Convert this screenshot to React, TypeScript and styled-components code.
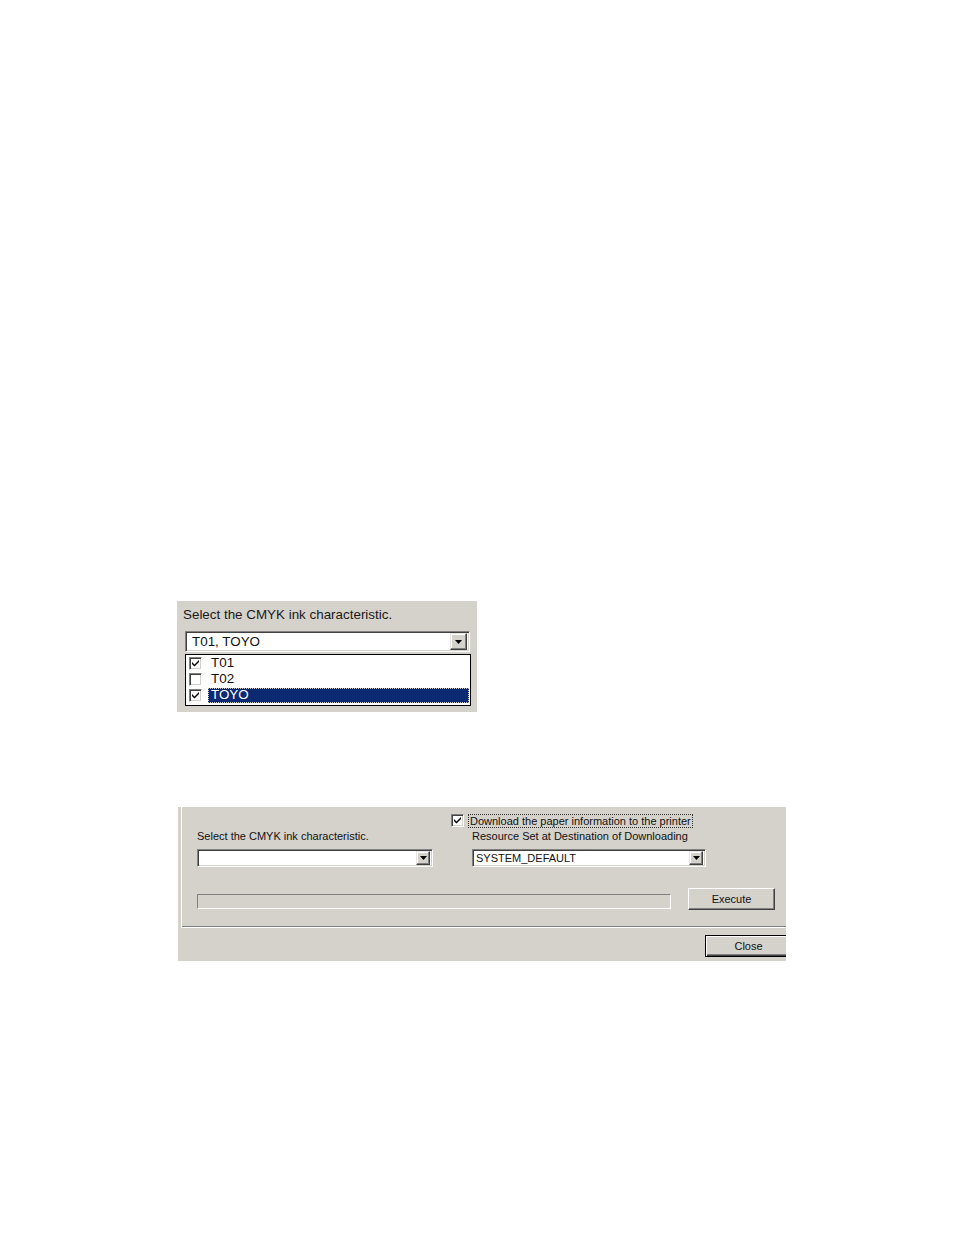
import React from 'react';
import styled, { createGlobalStyle } from 'styled-components';

const GlobalStyle = createGlobalStyle`
  html, body {
    margin: 0;
    padding: 0;
    background: #ffffff;
  }
  body {
    font-family: "Liberation Sans", Arial, sans-serif;
    color: #000;
  }
`;

const Page = styled.div`
  width: 954px;
  height: 1235px;
  padding: 601px 0 0 177px;
  box-sizing: border-box;
  display: flex;
  flex-direction: column;
  align-items: flex-start;
  gap: 95px;
`;

const Shot = styled.div<{ $w: number; $h: number; $shift?: number }>`
  width: ${(p) => p.$w}px;
  height: ${(p) => p.$h}px;
  margin-left: ${(p) => p.$shift ?? 0}px;
  background: #d5d2cc;
  box-sizing: border-box;
  overflow: hidden;
  display: flex;
  flex-direction: column;
`;

/* ---------- first screenshot ---------- */

const BigLabel = styled.div`
  font-size: 13.4px;
  line-height: 18px;
  margin: 5px 0 0 6px;
  color: #1a1a1a;
`;

const ComboWrap = styled.div`
  margin: 7px 0 0 8px;
`;

const Combo = styled.div<{ $w: number; $h: number; $pad: number }>`
  width: ${(p) => p.$w}px;
  height: ${(p) => p.$h}px;
  background: #fff;
  box-sizing: border-box;
  border-top: 1px solid #808080;
  border-left: 1px solid #808080;
  border-right: 1px solid #fff;
  border-bottom: 1px solid #fff;
  box-shadow: inset 1px 1px 0 #404040, inset -1px -1px 0 #d5d2cc;
  display: flex;
  align-items: center;
  padding: 0 2px 0 ${(p) => p.$pad}px;
`;

const ComboText = styled.span<{ $size: number }>`
  flex: 1;
  font-size: ${(p) => p.$size}px;
  white-space: nowrap;
  color: #111;
`;

const DropButton = styled.div<{ $s: number }>`
  width: ${(p) => p.$s}px;
  height: ${(p) => p.$s}px;
  box-sizing: border-box;
  background: #d5d2cc;
  border-top: 1px solid #e8e6e2;
  border-left: 1px solid #e8e6e2;
  border-right: 1px solid #404040;
  border-bottom: 1px solid #404040;
  box-shadow: inset -1px -1px 0 #808080, inset 1px 1px 0 #fff;
  display: flex;
  align-items: center;
  justify-content: center;
`;

const Arrow = () => (
  <svg width="7" height="4" viewBox="0 0 7 4">
    <path d="M0 0h7L3.5 4z" fill="#000" />
  </svg>
);

const ListBox = styled.div`
  width: 286px;
  height: 52px;
  margin: 2px 0 0 8px;
  background: #fff;
  border: 1px solid #000;
  box-sizing: border-box;
  padding: 0 1px 0 3px;
  display: flex;
  flex-direction: column;
`;

const ListRow = styled.div`
  height: 16px;
  display: flex;
  align-items: center;
  gap: 6px;
`;

const RowText = styled.span<{ $selected?: boolean }>`
  flex: 1;
  height: 15px;
  line-height: 14px;
  font-size: 13.4px;
  padding-left: 3px;
  color: ${(p) => (p.$selected ? '#fff' : '#111')};
  background: ${(p) => (p.$selected ? '#0c2a72' : 'transparent')};
  outline: ${(p) => (p.$selected ? '1px dotted #c8c8c8' : 'none')};
  outline-offset: -1px;
`;

const CheckBox = styled.span<{ $s: number }>`
  width: ${(p) => p.$s}px;
  height: ${(p) => p.$s}px;
  box-sizing: border-box;
  background: #fff;
  border-top: 1px solid #808080;
  border-left: 1px solid #808080;
  border-right: 1px solid #fff;
  border-bottom: 1px solid #fff;
  box-shadow: inset 1px 1px 0 #404040, inset -1px -1px 0 #d5d2cc;
  display: flex;
  align-items: center;
  justify-content: center;
  flex-shrink: 0;
`;

const Tick = () => (
  <svg width="7" height="7" viewBox="0 0 7 7">
    <path d="M0 2l2.5 2.5L7 0v2L2.5 6.5 0 4z" fill="#000" />
  </svg>
);

/* ---------- second screenshot ---------- */

const Panel = styled.div`
  height: 121px;
  margin-left: 3px;
  box-sizing: border-box;
  border-left: 1px solid #fff;
  border-bottom: 1px solid #fff;
  box-shadow: 0 -1px 0 #808080 inset;
  display: flex;
  flex-direction: column;
  padding-top: 7px;
`;

const CheckRow = styled.div`
  display: flex;
  align-items: center;
  gap: 5px;
  height: 13px;
  padding-left: 269px;
`;

const FocusLabel = styled.span`
  font-size: 11px;
  line-height: 12px;
  padding: 0 1px;
  outline: 1px dotted #333;
  color: #111;
`;

const FieldsRow = styled.div`
  display: grid;
  grid-template-columns: 236px 236px;
  column-gap: 39px;
  padding-left: 15px;
  margin-top: 2px;
`;

const Field = styled.div`
  display: flex;
  flex-direction: column;
  gap: 6px;
`;

const SmallLabel = styled.div`
  font-size: 11px;
  line-height: 14px;
  white-space: nowrap;
  color: #111;
`;

const ActionRow = styled.div`
  display: flex;
  align-items: center;
  gap: 17px;
  padding-left: 15px;
  margin-top: 21px;
`;

const Progress = styled.div`
  width: 474px;
  height: 15px;
  box-sizing: border-box;
  border-top: 1px solid #808080;
  border-left: 1px solid #808080;
  border-right: 1px solid #fff;
  border-bottom: 1px solid #fff;
  margin-top: 4px;
`;

const Button = styled.div<{ $default?: boolean }>`
  width: 87px;
  height: 22px;
  box-sizing: border-box;
  background: #d5d2cc;
  font-size: 11px;
  color: #111;
  display: flex;
  align-items: center;
  justify-content: center;
  flex-shrink: 0;
  border-top: 1px solid #fff;
  border-left: 1px solid #fff;
  border-right: 1px solid #404040;
  border-bottom: 1px solid #404040;
  box-shadow: inset -1px -1px 0 #808080;
  ${(p) =>
    p.$default &&
    `
    border: 1px solid #000;
    box-shadow: inset 1px 1px 0 #fff, inset -1px -1px 0 #404040, inset -2px -2px 0 #808080;
  `}
`;

const Footer = styled.div`
  display: flex;
  justify-content: flex-start;
  padding: 7px 0 0 527px;
`;

export default function App() {
  return (
    <>
      <GlobalStyle />
      <Page>
        <Shot $w={300} $h={111}>
          <BigLabel>Select the CMYK ink characteristic.</BigLabel>
          <ComboWrap>
            <Combo $w={285} $h={21} $pad={6}>
              <ComboText $size={13.4}>T01, TOYO</ComboText>
              <DropButton $s={17}>
                <Arrow />
              </DropButton>
            </Combo>
          </ComboWrap>
          <ListBox>
            <ListRow>
              <CheckBox $s={13}>
                <Tick />
              </CheckBox>
              <RowText>T01</RowText>
            </ListRow>
            <ListRow>
              <CheckBox $s={13} />
              <RowText>T02</RowText>
            </ListRow>
            <ListRow>
              <CheckBox $s={13}>
                <Tick />
              </CheckBox>
              <RowText $selected>TOYO</RowText>
            </ListRow>
          </ListBox>
        </Shot>

        <Shot $w={608} $h={154} $shift={1}>
          <Panel>
            <CheckRow>
              <CheckBox $s={13}>
                <Tick />
              </CheckBox>
              <FocusLabel>Download the paper information to the printer</FocusLabel>
            </CheckRow>
            <FieldsRow>
              <Field>
                <SmallLabel>Select the CMYK ink characteristic.</SmallLabel>
                <Combo $w={236} $h={18} $pad={3}>
                  <ComboText $size={11} />
                  <DropButton $s={14}>
                    <Arrow />
                  </DropButton>
                </Combo>
              </Field>
              <Field>
                <SmallLabel>Resource Set at Destination of Downloading</SmallLabel>
                <Combo $w={234} $h={18} $pad={3}>
                  <ComboText $size={11}>SYSTEM_DEFAULT</ComboText>
                  <DropButton $s={14}>
                    <Arrow />
                  </DropButton>
                </Combo>
              </Field>
            </FieldsRow>
            <ActionRow>
              <Progress />
              <Button>Execute</Button>
            </ActionRow>
          </Panel>
          <Footer>
            <Button $default>Close</Button>
          </Footer>
        </Shot>
      </Page>
    </>
  );
}
